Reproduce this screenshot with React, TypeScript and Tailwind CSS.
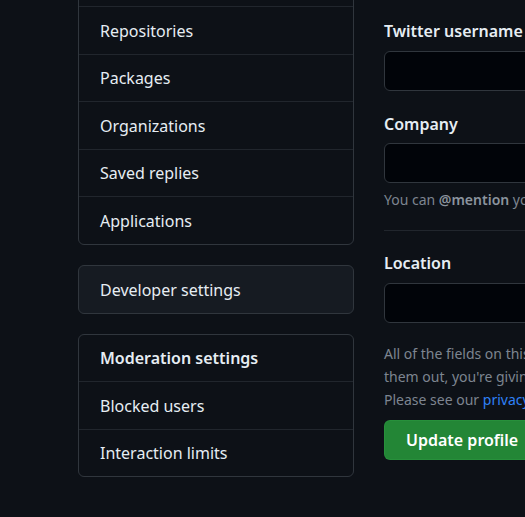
import React from 'react';

const font = { fontFamily: '"Noto Sans", "Liberation Sans", sans-serif' };

function MenuRow({
  label,
  h,
  bold = false,
  first = false,
}: {
  label: string;
  h: string;
  bold?: boolean;
  first?: boolean;
}) {
  return (
    <div
      className={`flex items-center px-[21px] text-[16px] text-[#e6edf3] ${h} ${
        first ? '' : 'border-t border-[#21262d]'
      } ${bold ? 'font-semibold' : ''}`}
    >
      {label}
    </div>
  );
}

function Label({ text, className = '' }: { text: string; className?: string }) {
  return (
    <div className={`h-6 text-[16px] font-semibold leading-6 text-[#e6edf3] whitespace-nowrap ${className}`}>
      {text}
    </div>
  );
}

export default function App() {
  return (
    <div style={font} className="h-[517px] w-[525px] overflow-hidden bg-[#0d1117]">
      <div className="flex">
        {/* Sidebar */}
        <div className="ml-[78px] w-[276px] shrink-0">
          <div className="-mt-[42px] rounded-md border border-[#30363d]">
            <MenuRow label="SSH and GPG keys" h="h-[47px]" first />
            <MenuRow label="Repositories" h="h-[48px]" />
            <MenuRow label="Packages" h="h-[47px]" />
            <MenuRow label="Organizations" h="h-[48px]" />
            <MenuRow label="Saved replies" h="h-[47px]" />
            <MenuRow label="Applications" h="h-[48px]" />
          </div>

          <div className="mt-5 rounded-md border border-[#30363d] bg-[#161b22]">
            <div className="flex h-[47px] items-center px-[21px] text-[16px] text-[#e6edf3]">Developer settings</div>
          </div>

          <div className="mt-5 rounded-md border border-[#30363d]">
            <MenuRow label="Moderation settings" h="h-[46px]" bold first />
            <MenuRow label="Blocked users" h="h-[48px]" />
            <MenuRow label="Interaction limits" h="h-[47px]" />
          </div>
        </div>

        {/* Profile form */}
        <div className="ml-[30px] w-[600px] shrink-0 pt-[19px]">
          <Label text="Twitter username" />
          <div className="mt-2 h-10 rounded-md border border-[#30363d] bg-[#010409]" />

          <Label text="Company" className="mt-[21px]" />
          <div className="mt-[7px] h-10 rounded-md border border-[#30363d] bg-[#010409]" />
          <p className="mt-[6px] text-[14px] leading-[22px] text-[#7d8590] whitespace-nowrap">
            You can <span className="font-semibold text-[#8b949e]">@mention</span> your company's GitHub organization to link it.
          </p>

          <div className="mt-[19px] border-t border-[#21262d]" />

          <Label text="Location" className="mt-5" />
          <div className="mt-2 h-10 rounded-md border border-[#30363d] bg-[#010409]" />

          <p className="mt-[19px] text-[14px] leading-[23px] text-[#7d8590] whitespace-nowrap">
            All of the fields on this page are optional and can be deleted at any time, and by filling
            <br />
            them out, you're giving us consent to share this data wherever your user profile appears.
            <br />
            Please see our <span className="text-[#2f81f7]">privacy statement</span> to learn more about how we use this information.
          </p>

          <button className="mt-[9px] h-10 rounded-md border border-[#2ea043]/40 bg-[#238636] px-[21px] text-[16px] font-semibold text-white">
            Update profile
          </button>
        </div>
      </div>
    </div>
  );
}
